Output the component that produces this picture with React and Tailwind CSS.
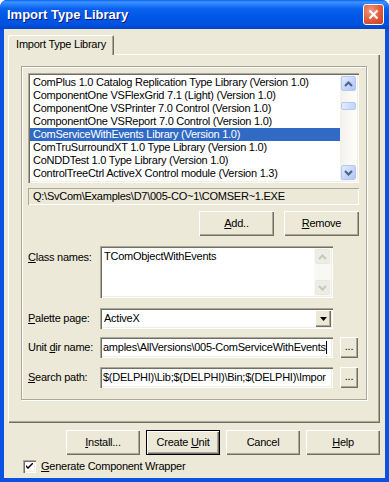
import React from 'react';

const raised =
  'bg-[#ece9d8] shadow-[inset_1px_1px_0_#fff,inset_-1px_-1px_0_#716f64,inset_-2px_-2px_0_#aca899]';
const sunken =
  'shadow-[inset_1px_1px_0_#aca899,inset_2px_2px_0_#716f64,inset_-1px_-1px_0_#fff,inset_-2px_-2px_0_#f1efe2] p-[2px]';

const libraries = [
  'ComPlus 1.0 Catalog Replication Type Library (Version 1.0)',
  'ComponentOne VSFlexGrid 7.1 (Light) (Version 1.0)',
  'ComponentOne VSPrinter 7.0 Control (Version 1.0)',
  'ComponentOne VSReport 7.0 Control (Version 1.0)',
  'ComServiceWithEvents Library (Version 1.0)',
  'ComTruSurroundXT 1.0 Type Library (Version 1.0)',
  'CoNDDTest 1.0 Type Library (Version 1.0)',
  'ControlTreeCtrl ActiveX Control module (Version 1.3)',
];

function Chevron({ up, disabled }) {
  return (
    <svg width="9" height="6" viewBox="0 0 9 6">
      <path
        d={up ? 'M1 5 L4.5 1.5 L8 5' : 'M1 1 L4.5 4.5 L8 1'}
        fill="none"
        stroke={disabled ? '#c9c7ba' : '#4d6185'}
        strokeWidth="2"
      />
    </svg>
  );
}

function ScrollBtn({ up, disabled }) {
  return (
    <div className="w-[17px] h-[17px] p-[1px]">
      <div
        className={`w-full h-full rounded-[2px] border flex items-center justify-center ${
          disabled
            ? 'border-[#e8e8df] bg-[#eeede5]'
            : 'border-[#b5c8f3] bg-[linear-gradient(135deg,#e3ebfd,#c2d3fb_60%,#b3c6f5)]'
        }`}
      >
        <Chevron up={up} disabled={disabled} />
      </div>
    </div>
  );
}

function Btn({ children, className = '', def }) {
  return (
    <div
      className={`flex items-center justify-center ${
        def ? `border border-black ${raised}` : raised
      } ${className}`}
    >
      {children}
    </div>
  );
}

function Edit({ children, className = '' }) {
  return (
    <div className={`bg-white ${sunken} ${className}`}>
      <div className="h-full flex items-center pl-[1px] overflow-hidden whitespace-nowrap">{children}</div>
    </div>
  );
}

export default function App() {
  return (
    <div className="w-[389px] h-[482px] flex flex-col bg-[#0b51e2] rounded-t-[7px] overflow-hidden font-['Liberation_Sans',Arial,sans-serif] text-[11px] text-black leading-none">
      {/* Title bar */}
      <div className="h-[29px] flex items-center pl-[7px] pr-[5px] bg-[linear-gradient(to_bottom,#0a5fef_0%,#3d95ff_7%,#2b84fb_14%,#0a61ef_30%,#0056e6_60%,#0052df_85%,#0044c9_100%)]">
        <span className="flex-1 text-white font-bold text-[13px] [text-shadow:1px_1px_0_#0a1883]">
          Import Type Library
        </span>
        <div className="w-[21px] h-[21px] rounded-[3px] border border-white bg-[radial-gradient(circle_at_35%_30%,#f09a7e,#e0593b_55%,#c8401f)] flex items-center justify-center">
          <svg width="11" height="11" viewBox="0 0 11 11">
            <path d="M1.5 1.5 L9.5 9.5 M9.5 1.5 L1.5 9.5" stroke="#fff" strokeWidth="2.2" />
          </svg>
        </div>
      </div>

      {/* Client area */}
      <div className="flex-1 mx-[4px] mb-[4px] bg-[#ece9d8] flex flex-col pt-[6px] pl-[4px] pr-[5px] tracking-[-0.25px]">
        {/* Tab */}
        <div className="relative z-10 -mb-[1px] w-[106px] h-[20px] bg-[#ece9d8] rounded-t-[2px] shadow-[inset_1px_1px_0_#fff,inset_-1px_0_0_#716f64,inset_-2px_0_0_#aca899] flex items-center justify-center pb-[1px]">
          Import Type Library
        </div>

        {/* Tab page */}
        <div className="w-[372px] h-[369px] shadow-[inset_1px_1px_0_#fff,inset_-1px_-1px_0_#716f64,inset_-2px_-2px_0_#aca899] pt-[12px] pl-[13px]">
          <div className="w-[346px] h-[334px] border border-[#aca899] shadow-[inset_1px_1px_0_#fff,1px_1px_0_#fff] p-[6px] flex flex-col">
            {/* Library list */}
            <div className={`w-[331px] h-[110px] bg-white ${sunken} flex`}>
              <div className="flex-1 overflow-hidden pt-[1px]">
                {libraries.map((name, i) => (
                  <div
                    key={name}
                    className={`h-[13px] leading-[13px] pl-[3px] whitespace-nowrap ${
                      i === 4 ? 'bg-[#316ac5] text-white' : ''
                    }`}
                  >
                    {name}
                  </div>
                ))}
                <div className="h-[2px] overflow-hidden">
                  <div className="h-[13px] leading-[13px] pl-[3px] whitespace-nowrap">
                    Conversion Services 2.0 Type Library (Version 2.0)
                  </div>
                </div>
              </div>
              <div className="w-[17px] flex flex-col bg-[linear-gradient(to_right,#f3f1ec,#fefefb)]">
                <ScrollBtn up />
                <div className="flex-1 pt-[10px]">
                  <div className="mx-[1px] h-[8px] rounded-[2px] border border-[#b5c8f3] bg-[linear-gradient(to_right,#e3ebfd,#c2d3fb)]" />
                </div>
                <ScrollBtn />
              </div>
            </div>

            {/* File path */}
            <div className="mt-[5px] w-[331px] h-[17px] shadow-[inset_1px_1px_0_#aca899,inset_-1px_-1px_0_#fff] flex items-center pl-[5px]">
              {'Q:\\SvCom\\Examples\\D7\\005-CO~1\\COMSER~1.EXE'}
            </div>

            {/* Add / Remove */}
            <div className="mt-[6px] w-[331px] flex justify-end gap-[10px]">
              <Btn className="w-[75px] h-[25px]">
                <span className="underline">A</span>dd..
              </Btn>
              <Btn className="w-[75px] h-[25px]">
                <span className="underline">R</span>emove
              </Btn>
            </div>

            {/* Class names */}
            <div className="mt-[10px] flex">
              <div className="w-[72px] pt-[6px]">
                <span className="underline">C</span>lass names:
              </div>
              <div className={`w-[233px] h-[52px] bg-white ${sunken} flex`}>
                <div className="flex-1 pl-[2px] pt-[3px]">TComObjectWithEvents</div>
                <div className="w-[17px] flex flex-col bg-[#f8f8f4]">
                  <ScrollBtn up disabled />
                  <div className="flex-1" />
                  <ScrollBtn disabled />
                </div>
              </div>
            </div>

            {/* Palette page */}
            <div className="mt-[10px] flex items-center">
              <div className="w-[72px]">
                <span className="underline">P</span>alette page:
              </div>
              <div className={`w-[233px] h-[21px] bg-white ${sunken} flex`}>
                <div className="flex-1 flex items-center pl-[2px]">ActiveX</div>
                <div className={`w-[16px] h-full ${raised} flex items-center justify-center`}>
                  <svg width="7" height="4" viewBox="0 0 7 4">
                    <path d="M0 0 H7 L3.5 4 Z" fill="#000" />
                  </svg>
                </div>
              </div>
            </div>

            {/* Unit dir name */}
            <div className="mt-[8px] flex items-center">
              <div className="w-[72px]">
                Unit <span className="underline">d</span>ir name:
              </div>
              <Edit className="w-[233px] h-[21px]">
                <span>{'amples\\AllVersions\\005-ComServiceWithEvents'}</span>
                <span className="w-[1px] h-[13px] bg-black" />
              </Edit>
              <Btn className="ml-[7px] w-[18px] h-[21px] pb-[3px]">...</Btn>
            </div>

            {/* Search path */}
            <div className="mt-[9px] flex items-center">
              <div className="w-[72px]">
                <span className="underline">S</span>earch path:
              </div>
              <Edit className="w-[233px] h-[21px]">
                {'$(DELPHI)\\Lib;$(DELPHI)\\Bin;$(DELPHI)\\Impor'}
              </Edit>
              <Btn className="ml-[7px] w-[18px] h-[21px] pb-[3px]">...</Btn>
            </div>
          </div>
        </div>

        {/* Dialog buttons */}
        <div className="mt-[7px] flex justify-end gap-[6px]">
          <Btn className="w-[74px] h-[25px]">
            <span className="underline">I</span>nstall...
          </Btn>
          <Btn def className="w-[74px] h-[25px]">
            Create&nbsp;<span className="underline">U</span>nit
          </Btn>
          <Btn className="w-[74px] h-[25px]">Cancel</Btn>
          <Btn className="w-[74px] h-[25px]">
            <span className="underline">H</span>elp
          </Btn>
        </div>

        {/* Checkbox */}
        <div className="mt-[5px] pl-[15px] flex items-center">
          <div className={`w-[13px] h-[13px] bg-white ${sunken} flex items-center justify-center`}>
            <svg width="7" height="7" viewBox="0 0 7 7">
              <path d="M0 2 L0 4 L2 6 L7 1 L7 -1 L2 4 Z" fill="#000" />
            </svg>
          </div>
          <span className="ml-[5px]">
            <span className="underline">G</span>enerate Component Wrapper
          </span>
        </div>
      </div>
    </div>
  );
}
